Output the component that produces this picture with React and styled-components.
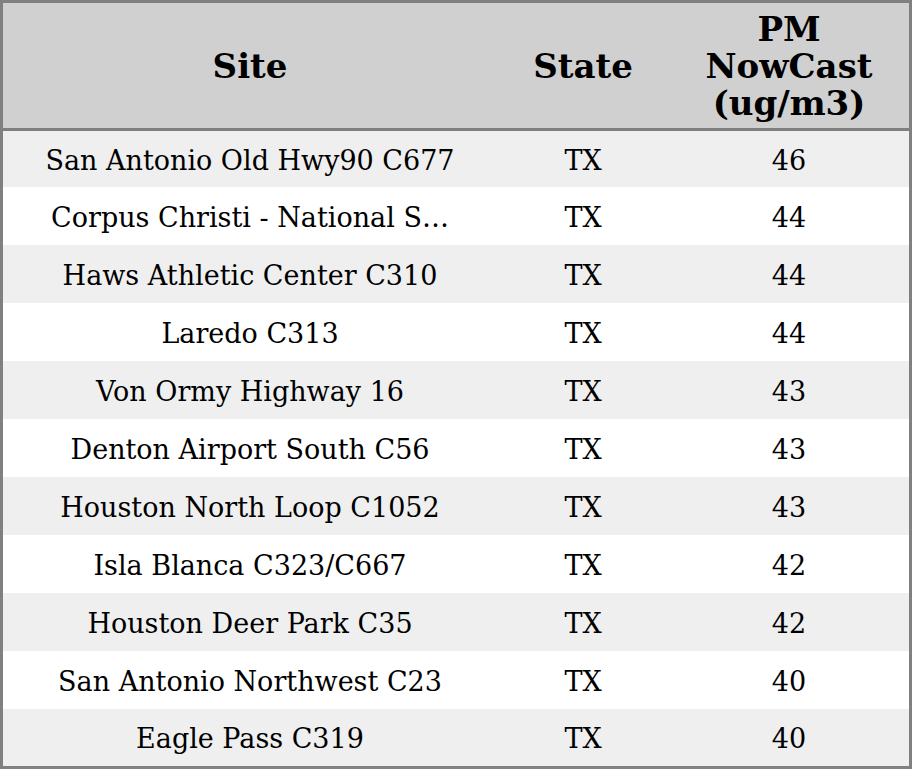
import styled, { createGlobalStyle } from "styled-components";

const rows = [
  ["San Antonio Old Hwy90 C677", "TX", 46],
  ["Corpus Christi - National S…", "TX", 44],
  ["Haws Athletic Center C310", "TX", 44],
  ["Laredo C313", "TX", 44],
  ["Von Ormy Highway 16", "TX", 43],
  ["Denton Airport South C56", "TX", 43],
  ["Houston North Loop C1052", "TX", 43],
  ["Isla Blanca C323/C667", "TX", 42],
  ["Houston Deer Park C35", "TX", 42],
  ["San Antonio Northwest C23", "TX", 40],
  ["Eagle Pass C319", "TX", 40],
];

export default function App() {
  return (
    <>
      <GlobalStyle />
      <Table>
        <HeadRow>
          <HeadCell>Site</HeadCell>
          <HeadCell>State</HeadCell>
          <HeadCell>
            PM
            <br />
            NowCast
            <br />
            (ug/m3)
          </HeadCell>
        </HeadRow>
        {rows.map(([site, state, value], i) => (
          <Row key={site} $shaded={i % 2 === 0}>
            <SiteCell>{site}</SiteCell>
            <Cell>{state}</Cell>
            <Cell>{value}</Cell>
          </Row>
        ))}
      </Table>
    </>
  );
}

const GlobalStyle = createGlobalStyle`
  html, body {
    margin: 0;
    padding: 0;
    background: #ffffff;
  }
  body {
    font-family: "DejaVu Serif", "Liberation Serif", serif;
    color: #000;
  }
`;

const Table = styled.div`
  box-sizing: border-box;
  width: 912px;
  height: 769px;
  border: 3px solid #808080;
  display: grid;
  grid-template-rows: 128px 56px repeat(9, 58px) 1fr;
`;

const HeadRow = styled.div`
  display: grid;
  grid-template-columns: 494px 172px 1fr;
  background: #d0d0d0;
  border-bottom: 3px solid #808080;
`;

const HeadCell = styled.div`
  display: flex;
  align-items: center;
  justify-content: center;
  text-align: center;
  font-weight: bold;
  font-size: 34px;
  line-height: 37px;
  padding-top: 2px;
`;

const Row = styled.div`
  display: grid;
  grid-template-columns: 494px 172px 1fr;
  align-items: center;
  background: ${(p) => (p.$shaded ? "#efefef" : "#ffffff")};
  font-size: 27px;
  padding-top: 2px;
  min-height: 0;
`;

const Cell = styled.div`
  text-align: center;
  white-space: nowrap;
`;

const SiteCell = styled(Cell)`
  overflow: hidden;
  text-overflow: ellipsis;
  padding: 0 20px;
`;
